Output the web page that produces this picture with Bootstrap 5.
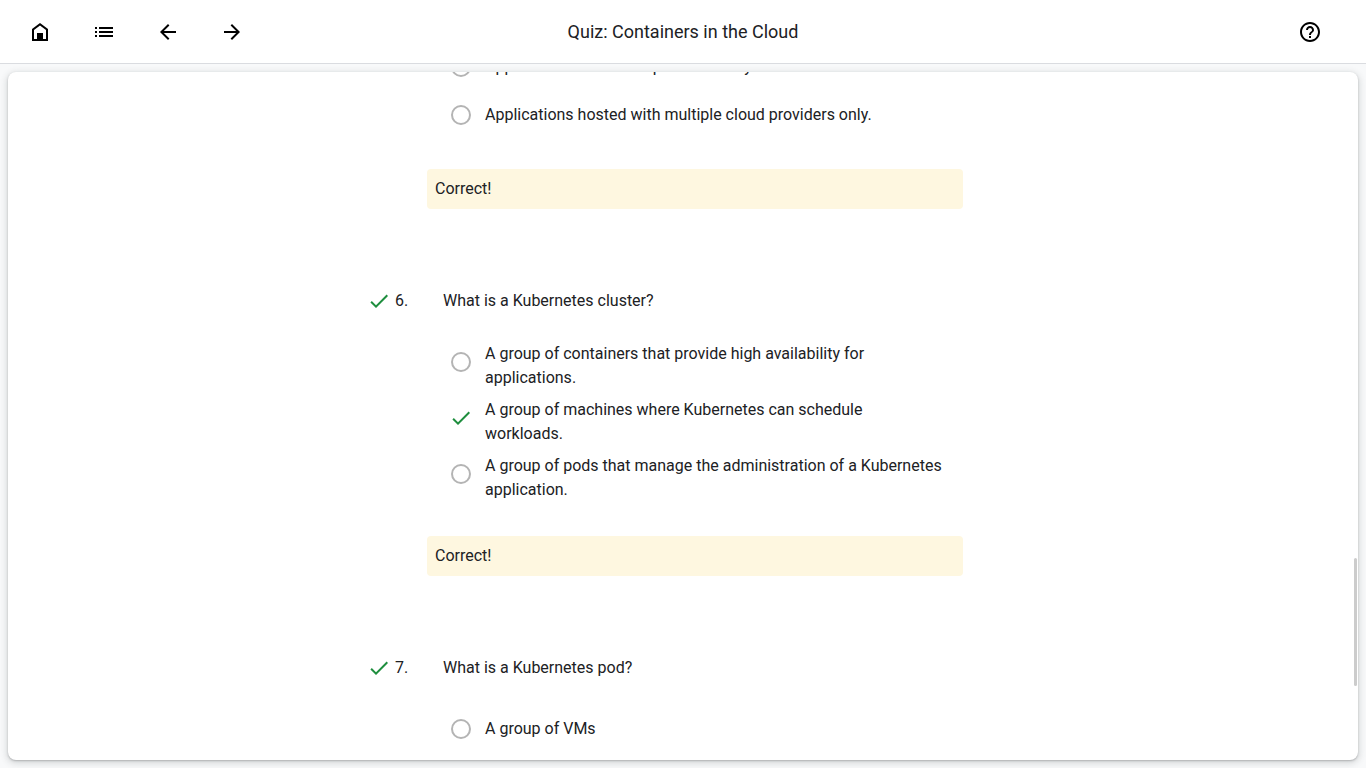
<!DOCTYPE html>
<html lang="en">
<head>
<meta charset="utf-8">
<meta name="viewport" content="width=device-width, initial-scale=1">
<title>Quiz: Containers in the Cloud</title>
<link href="https://cdn.jsdelivr.net/npm/bootstrap@5.3.0/dist/css/bootstrap.min.css" rel="stylesheet">
<style>
  body { font-family: Roboto, "Liberation Sans", sans-serif; color: #202124; background: #f8f9fa; }
  .topbar { height: 64px; border-bottom: 1px solid #dadce0; display: grid; grid-template-columns: 1fr auto 1fr; }
  .topbar h1 { font-size: 18px; line-height: 24px; font-weight: 400; }
  .icon-btn { width: 48px; height: 48px; color: #000; }
  .icon-btn svg { width: 24px; height: 24px; fill: currentColor; display: block; }
  .sheet { border-radius: 8px; box-shadow: 0 1px 2px rgba(60,64,67,.3), 0 2px 6px 2px rgba(60,64,67,.15); }
  .quiz { max-width: 632px; margin-top: -25px; }
  .question { margin-bottom: 80px; }
  .question-title { margin-bottom: 29px; }
  .question-title h2 { font-size: 16px; line-height: 24px; font-weight: 400; }
  .tick { width: 24px; height: 24px; fill: #1e8e3e; }
  .num { width: 48px; margin-left: 4px; }
  .choices { margin-left: 74px; margin-right: 56px; }
  .choice { min-height: 40px; margin-bottom: 8px; }
  .choice-box { width: 40px; height: 40px; margin-right: 4px; }
  .choice-box input { appearance: none; width: 20px; height: 20px; margin: 0; border: 2px solid #b4b4b4; border-radius: 50%; }
  .choice-box input:checked { width: 24px; height: 24px; border: 0; border-radius: 0;
    background: url("data:image/svg+xml,%3Csvg xmlns='http://www.w3.org/2000/svg' viewBox='0 0 24 24'%3E%3Cpath fill='%231e8e3e' d='M9 16.17 4.83 12l-1.42 1.41L9 19 21 7l-1.41-1.41z'/%3E%3C/svg%3E") center / 24px no-repeat; }
  .feedback-note { margin: 34px 36px 0 60px; background: #fef7e0; border-radius: 4px; line-height: 24px; }
  .thumb { top: 70.6%; height: 18.6%; right: 1px; width: 3px; background: #ccc; border-radius: 2px; }
</style>
</head>
<body class="vh-100 d-flex flex-column overflow-hidden">
<header class="topbar bg-white align-items-center flex-shrink-0">
  <nav class="d-flex gap-3 ps-3" aria-label="Course">
    <button class="icon-btn btn p-0 border-0 d-flex align-items-center justify-content-center" type="button" aria-label="Home"><svg viewBox="0 0 24 24"><path fill-rule="evenodd" d="M4 21V9l8-6 8 6v12zM6 19h3v-6h6v6h3v-9l-6-4.500L6 10z"/><path d="M9 13h6v8H9z"/></svg></button>
    <button class="icon-btn btn p-0 border-0 d-flex align-items-center justify-content-center" type="button" aria-label="Outline"><svg viewBox="0 0 24 24"><path d="M3 7h2v2H3zM3 11h2v2H3zM3 15h2v2H3zM7 7h14v2H7zM7 11h14v2H7zM7 15h14v2H7z"/></svg></button>
    <button class="icon-btn btn p-0 border-0 d-flex align-items-center justify-content-center" type="button" aria-label="Previous"><svg viewBox="0 0 24 24"><path d="M20 11H7.830l5.590-5.590L12 4l-8 8 8 8 1.410-1.410L7.830 13H20z"/></svg></button>
    <button class="icon-btn btn p-0 border-0 d-flex align-items-center justify-content-center" type="button" aria-label="Next"><svg viewBox="0 0 24 24"><path d="M12 4l-1.410 1.410L16.170 11H4v2h12.170l-5.580 5.590L12 20l8-8z"/></svg></button>
  </nav>
  <h1 class="m-0 text-center">Quiz: Containers in the Cloud</h1>
  <div class="d-flex justify-content-end pe-3 me-3">
    <button class="icon-btn btn p-0 border-0 d-flex align-items-center justify-content-center" type="button" aria-label="Help"><svg viewBox="0 0 24 24"><path d="M11 18h2v-2h-2v2zm1-16C6.480 2 2 6.480 2 12s4.480 10 10 10 10-4.480 10-10S17.520 2 12 2zm0 18c-4.410 0-8-3.590-8-8s3.590-8 8-8 8 3.590 8 8-3.590 8-8 8zm0-14c-2.210 0-4 1.790-4 4h2c0-1.100.9-2 2-2s2 .9 2 2c0 2-3 1.750-3 5h2c0-2.250 3-2.500 3-5 0-2.210-1.790-4-4-4z"/></svg></button>
  </div>
</header>

<main class="sheet bg-white m-2 flex-grow-1 position-relative overflow-hidden">
  <div class="quiz mx-auto">
    <section class="question">
      <div class="choices">
        <div class="choice d-flex">
          <div class="choice-box d-flex align-items-center justify-content-center flex-shrink-0"><input type="radio" name="q5" id="q5b"></div>
          <label class="align-self-center" for="q5b">Applications hosted on-premises only.</label>
        </div>
        <div class="choice d-flex mb-0">
          <div class="choice-box d-flex align-items-center justify-content-center flex-shrink-0"><input type="radio" name="q5" id="q5c"></div>
          <label class="align-self-center" for="q5c">Applications hosted with multiple cloud providers only.</label>
        </div>
      </div>
      <div class="feedback-note p-2">Correct!</div>
    </section>

    <section class="question">
      <div class="question-title d-flex">
        <svg class="tick flex-shrink-0" viewBox="0 0 24 24" role="img" aria-label="Correct"><path d="M9 16.170 4.830 12l-1.420 1.410L9 19 21 7l-1.410-1.410z"/></svg>
        <span class="num flex-shrink-0">6.</span>
        <h2 class="m-0">What is a Kubernetes cluster?</h2>
      </div>
      <div class="choices">
        <div class="choice d-flex">
          <div class="choice-box d-flex align-items-center justify-content-center flex-shrink-0"><input type="radio" name="q6" id="q6a"></div>
          <label class="align-self-center" for="q6a">A group of containers that provide high availability for applications.</label>
        </div>
        <div class="choice d-flex">
          <div class="choice-box d-flex align-items-center justify-content-center flex-shrink-0"><input type="radio" name="q6" id="q6b" checked></div>
          <label class="align-self-center" for="q6b">A group of machines where Kubernetes can schedule workloads.</label>
        </div>
        <div class="choice d-flex mb-0">
          <div class="choice-box d-flex align-items-center justify-content-center flex-shrink-0"><input type="radio" name="q6" id="q6c"></div>
          <label class="align-self-center" for="q6c">A group of pods that manage the administration of a Kubernetes application.</label>
        </div>
      </div>
      <div class="feedback-note p-2">Correct!</div>
    </section>

    <section>
      <div class="question-title d-flex">
        <svg class="tick flex-shrink-0" viewBox="0 0 24 24" role="img" aria-label="Correct"><path d="M9 16.170 4.830 12l-1.420 1.410L9 19 21 7l-1.410-1.410z"/></svg>
        <span class="num flex-shrink-0">7.</span>
        <h2 class="m-0">What is a Kubernetes pod?</h2>
      </div>
      <div class="choices">
        <div class="choice d-flex">
          <div class="choice-box d-flex align-items-center justify-content-center flex-shrink-0"><input type="radio" name="q7" id="q7a"></div>
          <label class="align-self-center" for="q7a">A group of VMs</label>
        </div>
      </div>
    </section>
  </div>
  <div class="thumb position-absolute" aria-hidden="true"></div>
</main>
<script src="https://cdn.jsdelivr.net/npm/bootstrap@5.3.0/dist/js/bootstrap.bundle.min.js"></script>
</body>
</html>
